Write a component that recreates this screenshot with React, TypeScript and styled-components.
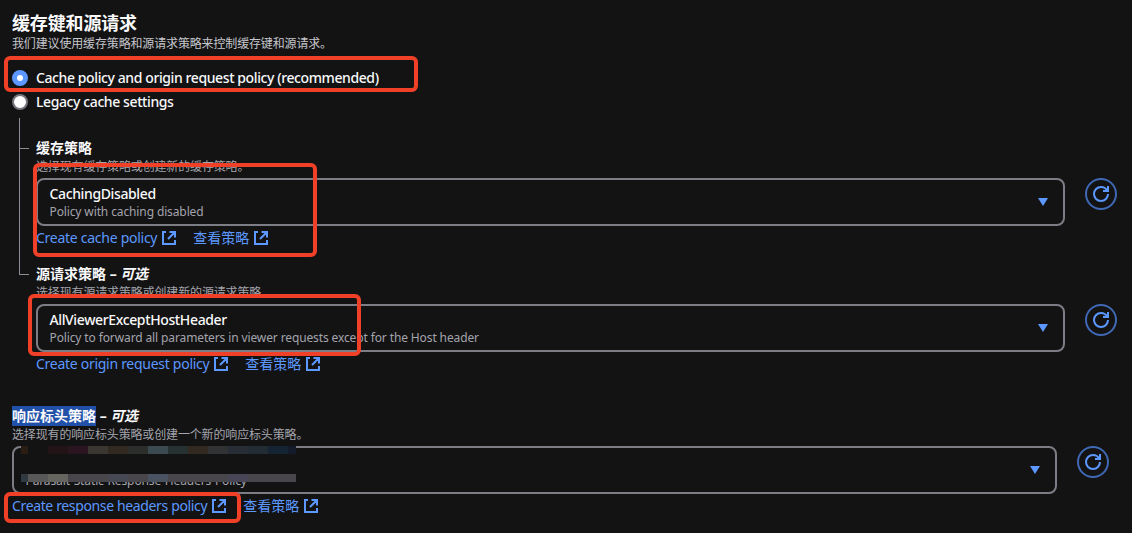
import React from "react"
import styled, { createGlobalStyle } from "styled-components"

const topMosaic = [
  "#2a1e14 7", "#131313 20", "#221416 20", "#2a1420 20", "#3a3630 20",
  "#322a20 20", "#2c2e2c 20", "#3a4a50 20", "#263232 20", "#322a20 20",
  "#303234 20", "#282c34 20", "#222c34 20", "#142432 20", "#141c2c 8",
]

const bottomMosaic = [
  "#303840 7", "#585858 20", "#66645e 20", "#48464a 40", "#464854 20",
  "#48464a 20", "#485260 20", "#48464a 60", "#484656 20", "#48464a 48",
]

const ExternalIcon = () => (
  <LinkIcon viewBox="0 0 16 16">
    <path d="M5 2H2v12h12v-4M8.5 2H14v5.5M14 2 7 9" />
  </LinkIcon>
)

const RefreshIcon = () => (
  <svg width="16" height="16" viewBox="0 0 16 16" fill="none" stroke="#5c98ff" strokeWidth="2">
    <path d="M10 5h5V0" />
    <path d="M15 8c0 3.87-3.13 7-7 7s-7-3.13-7-7 3.13-7 7-7c2.79 0 5.2 1.63 6.33 4" />
  </svg>
)

interface FieldProps {
  label: string
  optional?: boolean
  highlighted?: boolean
  description: string
  value?: string
  detail: string
  link: string
  spacing?: string
  redacted?: boolean
}

const PolicyField = ({
  label,
  optional,
  highlighted,
  description,
  value,
  detail,
  link,
  spacing,
  redacted,
}: FieldProps) => (
  <Field>
    <Label>
      {highlighted ? <Selection>{label}</Selection> : label}
      {optional && (
        <>
          {" – "}
          <em>可选</em>
        </>
      )}
    </Label>
    <Description $muted>{description}</Description>
    <Controls>
      <Select>
        <Value>{value}</Value>
        <Detail $low={redacted}>{detail}</Detail>
        <Caret viewBox="0 0 10 8">
          <path d="M0 0h10L5 8z" />
        </Caret>
        {redacted && (
          <>
            <Mosaic cells={topMosaic} top={-2} />
            <Mosaic cells={bottomMosaic} top={26} />
          </>
        )}
      </Select>
      <RefreshButton aria-label="refresh">
        <RefreshIcon />
      </RefreshButton>
    </Controls>
    <Links>
      <Link $spacing={spacing}>
        <LinkText>{link}</LinkText>
        <ExternalIcon />
      </Link>
      <Link>
        <LinkText>查看策略</LinkText>
        <ExternalIcon />
      </Link>
    </Links>
  </Field>
)

const Mosaic = ({ cells, top }: { cells: string[]; top: number }) => (
  <MosaicRow $top={top}>
    {cells.map((cell, i) => {
      const [color, width] = cell.split(" ")
      return <Cell key={i} $color={color} $width={Number(width)} />
    })}
  </MosaicRow>
)

export default function App() {
  return (
    <Page>
      <GlobalStyle />
      <Title>缓存键和源请求</Title>
      <Description>我们建议使用缓存策略和源请求策略来控制缓存键和源请求。</Description>
      <Radios>
        <RadioRow>
          <Radio $checked />
          <RadioText>Cache policy and origin request policy (recommended)</RadioText>
        </RadioRow>
        <RadioRow>
          <Radio />
          <RadioText>Legacy cache settings</RadioText>
        </RadioRow>
      </Radios>
      <Tree>
        <Branch>
          <PolicyField
            label="缓存策略"
            description="选择现有缓存策略或创建新的缓存策略。"
            value="CachingDisabled"
            detail="Policy with caching disabled"
            link="Create cache policy"
            spacing="-0.27px"
          />
        </Branch>
        <Branch $last>
          <PolicyField
            label="源请求策略"
            optional
            description="选择现有源请求策略或创建新的源请求策略。"
            value="AllViewerExceptHostHeader"
            detail="Policy to forward all parameters in viewer requests except for the Host header"
            link="Create origin request policy"
            spacing="-0.28px"
          />
        </Branch>
      </Tree>
      <Standalone>
        <PolicyField
          label="响应标头策略"
          optional
          highlighted
          redacted
          description="选择现有的响应标头策略或创建一个新的响应标头策略。"
          detail="Parasait-Static-Response-Headers-Policy"
          link="Create response headers policy"
          spacing="-0.36px"
        />
      </Standalone>
      <Marker $x={4} $y={56} $w={414} $h={36} />
      <Marker $x={33} $y={163} $w={284} $h={94} />
      <Marker $x={28} $y={294} $w={333} $h={62} />
      <Marker $x={4} $y={492} $w={237} $h={31} />
    </Page>
  )
}

const GlobalStyle = createGlobalStyle`
  * {
    box-sizing: border-box;
  }

  body {
    margin: 0;
    background: #131313;
  }
`

const Page = styled.main`
  position: relative;
  width: 1132px;
  height: 533px;
  padding: 12px 15px 0 12px;
  overflow: hidden;
  background: #131313;
  color: #f9f9fb;
  font-family: "Noto Sans", "Noto Sans CJK SC", sans-serif;
  font-size: 14px;
  white-space: nowrap;
`

const Title = styled.h2`
  margin: 0;
  height: 22px;
  font-size: 18px;
  font-weight: 700;
  line-height: 22px;
  letter-spacing: -0.15px;
`

const Description = styled.p<{ $muted?: boolean }>`
  margin: 0;
  height: 20px;
  color: ${({ $muted }) => ($muted ? "#a4a4ad" : "#c6c6cd")};
  font-size: 12px;
  line-height: ${({ $muted }) => ($muted ? "17px" : "20px")};
  letter-spacing: -0.15px;
`

const Radios = styled.div`
  display: flex;
  flex-direction: column;
  padding-top: 12px;
`

const RadioRow = styled.label`
  display: flex;
  align-items: center;
  gap: 8px;
  height: 24px;
  font-weight: 500;
  letter-spacing: -0.4px;
`

const RadioText = styled.span`
  padding-bottom: 2px;
`

const Radio = styled.span<{ $checked?: boolean }>`
  width: 16px;
  height: 16px;
  border: ${({ $checked }) => ($checked ? "5px solid #5c98ff" : "2px solid #75757d")};
  border-radius: 50%;
  background: #fff;
`

const Tree = styled.div`
  display: flex;
  flex-direction: column;
  margin: 4px -8px 0 7px;
`

const Branch = styled.div<{ $last?: boolean }>`
  position: relative;
  height: 126px;
  padding: 20px 8px 0 17px;

  &::before {
    content: "";
    position: absolute;
    top: 0;
    left: 0;
    height: ${({ $last }) => ($last ? "31px" : "100%")};
    border-left: 1px solid #8c8c94;
  }

  &::after {
    content: "";
    position: absolute;
    top: 30px;
    left: 0;
    width: 10px;
    border-top: 1px solid #8c8c94;
  }
`

const Standalone = styled.div`
  padding: 36px 8px 0 0;
`

const Field = styled.section`
  display: flex;
  flex-direction: column;
`

const Label = styled.div`
  height: 20px;
  font-weight: 700;
  line-height: 20px;

  em {
    letter-spacing: -0.3px;
  }
`

const Selection = styled.span`
  display: inline-block;
  height: 20px;
  background: #2050a8;
`

const Controls = styled.div`
  display: flex;
  gap: 20px;
`

const Select = styled.div`
  position: relative;
  flex: 1;
  height: 48px;
  padding: 4px 12px 4px 11.5px;
  border: 2px solid #7d7d85;
  border-radius: 8px;
`

const Value = styled.div`
  height: 20px;
  font-weight: 500;
  line-height: 20px;
  letter-spacing: -0.37px;
`

const Detail = styled.div<{ $low?: boolean }>`
  height: 16px;
  color: #a4a4ad;
  font-size: 12px;
  line-height: ${({ $low }) => ($low ? "18px" : "16px")};
  letter-spacing: -0.12px;
`

const Caret = styled.svg`
  position: absolute;
  top: 18px;
  right: 15px;
  width: 10px;
  height: 8px;
  fill: #5c98ff;
`

const RefreshButton = styled.button`
  display: flex;
  align-items: center;
  justify-content: center;
  width: 32px;
  height: 32px;
  padding: 0;
  border: 2px solid #4068b4;
  border-radius: 50%;
  background: transparent;
`

const Links = styled.div`
  display: flex;
  gap: 16px;
  height: 24px;
`

const Link = styled.a<{ $spacing?: string }>`
  display: flex;
  align-items: center;
  gap: 4px;
  color: #5c98ff;
  letter-spacing: ${({ $spacing }) => $spacing || "normal"};
`

const LinkText = styled.span`
  padding-bottom: 2px;
`

const LinkIcon = styled.svg`
  width: 16px;
  height: 16px;
  fill: none;
  stroke: #5c98ff;
  stroke-width: 2;
`

const MosaicRow = styled.div<{ $top: number }>`
  position: absolute;
  top: ${({ $top }) => $top}px;
  left: 7px;
  display: flex;
  height: 8px;
`

const Cell = styled.span<{ $color: string; $width: number }>`
  width: ${({ $width }) => $width}px;
  background: ${({ $color }) => $color};
`

const Marker = styled.div<{ $x: number; $y: number; $w: number; $h: number }>`
  position: absolute;
  left: ${({ $x }) => $x}px;
  top: ${({ $y }) => $y}px;
  width: ${({ $w }) => $w}px;
  height: ${({ $h }) => $h}px;
  border: 4px solid #f04028;
  border-radius: 6px;
`
